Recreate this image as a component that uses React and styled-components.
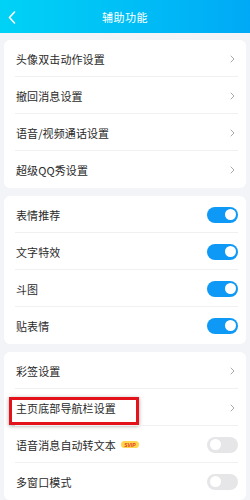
import React from 'react'
import styled, { createGlobalStyle } from 'styled-components'

const GlobalStyle = createGlobalStyle`
    html, body {
        margin: 0;
        padding: 0;
        background: #f3f4f8;
    }
    body {
        font-family: "Noto Sans CJK SC", "Noto Sans", sans-serif;
        width: 250px;
        overflow: hidden;
    }
`

const groups = [
    [
        { title: '头像双击动作设置', type: 'link' },
        { title: '撤回消息设置', type: 'link' },
        { title: '语音/视频通话设置', type: 'link' },
        { title: '超级QQ秀设置', type: 'link' },
    ],
    [
        { title: '表情推荐', type: 'switch', on: true },
        { title: '文字特效', type: 'switch', on: true },
        { title: '斗图', type: 'switch', on: true },
        { title: '贴表情', type: 'switch', on: true },
    ],
    [
        { title: '彩签设置', type: 'link' },
        { title: '主页底部导航栏设置', type: 'link', marked: true },
        { title: '语音消息自动转文本', type: 'switch', on: false, svip: true },
        { title: '多窗口模式', type: 'switch', on: false },
    ],
]

const App = () => {
    return (
        <Page>
            <GlobalStyle />
            <Header>
                <Back>
                    <svg width="8" height="13" viewBox="0 0 8 13">
                        <polyline points="6.5,1 1.5,6.5 6.5,12" fill="none" stroke="#fff" strokeWidth="1.6" strokeLinecap="round" strokeLinejoin="round" />
                    </svg>
                </Back>
                <Title>辅助功能</Title>
            </Header>

            {groups.map((rows, gi) => (
                <Card key={gi}>
                    {rows.map((row, ri) => (
                        <Row key={ri} $last={ri === rows.length - 1}>
                            <Label>
                                {row.title}
                                {row.svip && <Badge>SVIP</Badge>}
                            </Label>
                            {row.type === 'link' ? (
                                <Chevron>
                                    <svg width="5" height="8" viewBox="0 0 5 8">
                                        <polyline points="1,1 4,4 1,7" fill="none" stroke="#a8a8ad" strokeWidth="1" strokeLinecap="round" strokeLinejoin="round" />
                                    </svg>
                                </Chevron>
                            ) : (
                                <Switch $on={row.on}><Knob /></Switch>
                            )}
                            {row.marked && <Marker />}
                        </Row>
                    ))}
                </Card>
            ))}
        </Page>
    )
}

// styled
const Page = styled.div`
    display: flex;
    flex-direction: column;
    gap: 8px;
    height: 500px;
`

const Header = styled.header`
    position: relative;
    height: 33px;
    display: flex;
    align-items: center;
    justify-content: center;
    background: linear-gradient(90deg, #00d2f6 0%, #00bff6 50%, #00a9f6 100%);
    margin-bottom: -1px;
`

const Back = styled.div`
    position: absolute;
    left: 8px;
    top: 11px;
    display: flex;
`

const Title = styled.h1`
    margin: 0;
    color: #fff;
    font-size: 11px;
    font-weight: 400;
    letter-spacing: 0.5px;
`

const Card = styled.section`
    margin: 0 4px;
    background: #fff;
    border-radius: 6px;
    display: flex;
    flex-direction: column;
`

const Row = styled.div`
    position: relative;
    height: 37px;
    display: flex;
    align-items: center;
    justify-content: space-between;
    padding: 0 8px 0 12px;
    &::after {
        content: '';
        display: ${p => (p.$last ? 'none' : 'block')};
        position: absolute;
        left: 11px;
        right: 8px;
        bottom: 0;
        height: 1px;
        background: #f0f0f2;
    }
`

const Label = styled.span`
    display: flex;
    align-items: center;
    gap: 5px;
    font-size: 11px;
    color: #2a2a2a;
    letter-spacing: 0.1px;
`

const Badge = styled.span`
    display: inline-flex;
    align-items: center;
    justify-content: center;
    width: 18px;
    height: 7px;
    border-radius: 4px;
    background: #ffd64c;
    color: #e5372b;
    font-family: "Liberation Sans", Arial, sans-serif;
    font-size: 5px;
    font-weight: 700;
    font-style: italic;
    letter-spacing: 0;
`

const Chevron = styled.span`
    display: flex;
    margin-right: 3px;
`

const Switch = styled.span`
    width: 31px;
    height: 16px;
    border-radius: 8px;
    background: ${p => (p.$on ? '#0d99f5' : '#e6e6e8')};
    display: flex;
    align-items: center;
    justify-content: ${p => (p.$on ? 'flex-end' : 'flex-start')};
    padding: 0 2.5px;
    box-sizing: border-box;
`

const Knob = styled.span`
    width: 11px;
    height: 11px;
    border-radius: 50%;
    background: #fff;
`

const Marker = styled.span`
    position: absolute;
    left: 5px;
    top: 8px;
    width: 130px;
    height: 28px;
    box-sizing: border-box;
    border: 3px solid #e3121b;
    box-shadow: 0 1px 4px rgba(0, 0, 0, 0.35);
`

export default App
